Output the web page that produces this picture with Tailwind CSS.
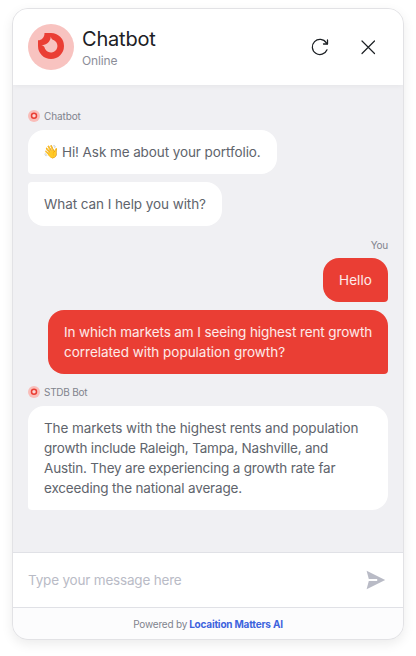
<!DOCTYPE html>
<html lang="en">
<head>
<meta charset="utf-8">
<title>Chatbot</title>
<script src="https://cdn.jsdelivr.net/npm/@tailwindcss/browser@4"></script>
</head>
<body class="bg-white w-[416px] h-[656px] overflow-hidden px-3 pt-2 font-['Inter',sans-serif]">
<svg class="hidden">
  <symbol id="mini" viewBox="0 0 12 12"><circle cx="6" cy="6" r="6" fill="#f9bdb9"/><circle cx="6" cy="5.8" r="2.500" fill="#fbd6d3" stroke="#ea3e34" stroke-width="1.5"/></symbol>
</svg>
<main class="w-[392px] h-[632px] rounded-2xl border border-[#e2e2e5] overflow-hidden flex flex-col bg-[#f0f0f3] shadow-[0_4px_12px_rgba(0,0,0,0.08)]">
  <header class="h-[76px] shrink-0 bg-white flex items-center pl-[15px] pr-[25px] shadow-[0_1px_6px_rgba(0,0,0,0.05)]">
    <svg class="size-[46px] shrink-0" viewBox="0 0 46 46"><circle cx="23" cy="23" r="23" fill="#f8c3c0"/><path d="M16.500 9H23a13 13 0 1 1-13 13V16.300c3.800 0 6.500-2.700 6.500-7.300Z" fill="#ea3e34"/><path d="M22.800 12.400c.5 2.300 1.300 3.200 3.200 3.800a6.500 6.500 0 1 1-9.100 8.200c-.6-1.900-1.500-2.800-3.500-3.300 5.500-.5 9-3.200 9.400-8.700Z" fill="#f8c3c0"/></svg>
    <div class="ml-2 flex-1 pt-[2px]">
      <h1 class="text-[20px] leading-6 text-[#1c2024]"><span class="tracking-[-0.2px]">Chatbot</span></h1>
      <p class="text-[12px] leading-4 mt-[2px] text-[#8b8d98]"><span class="tracking-[-0.15px]">Online</span></p>
    </div>
    <svg class="size-5 mr-7" viewBox="0 0 20 20" fill="none" stroke="#1c2024" stroke-width="1.3" stroke-linecap="round" stroke-linejoin="round"><path d="M17 12.800A7.600 7.600 0 1 1 16.300 5.800L17.200 6.800"/><path d="M17.500 3v4h-4"/></svg>
    <svg class="size-5" viewBox="0 0 20 20" fill="none" stroke="#1c2024" stroke-width="1.2" stroke-linecap="round"><path d="m4 4 12.500 12.500M16.500 4 4 16.500"/></svg>
  </header>
  <section class="flex-1 px-[15px] pt-[25px] flex flex-col items-start text-[13.5px] leading-5 text-[#60646c] whitespace-nowrap">
    <div class="flex items-center gap-1 h-3 text-[10px] leading-3 text-[#80838d]"><svg class="size-3"><use href="#mini"/></svg><span class="tracking-[-0.1px]">Chatbot</span></div>
    <div class="mt-2 w-[249px] h-11 bg-white rounded-2xl rounded-bl px-4 py-3 flex gap-[3px]"><span class="w-[15px] text-[13px] -ml-px mr-px -mt-px">👋</span><span class="tracking-[-0.09px]">Hi! Ask me about your portfolio.</span></div>
    <div class="mt-2 w-[194px] h-11 bg-white rounded-2xl rounded-tl px-4 py-3"><span class="tracking-[-0.07px]">What can I help you with?</span></div>
    <div class="mt-[13px] h-3 self-end text-[10px] leading-3 text-[#80838d]"><span class="tracking-[-0.2px]">You</span></div>
    <div class="mt-[7px] w-[65px] h-11 self-end bg-[#ea3e34] text-white/90 rounded-2xl rounded-br px-4 py-3"><span class="tracking-[0.1px]">Hello</span></div>
    <div class="mt-2 w-[340px] h-16 self-end bg-[#ea3e34] text-white/90 rounded-2xl rounded-br px-4 py-3"><span class="tracking-[-0.1px]">In which markets am I seeing highest rent growth</span><br><span class="tracking-[-0.02px]">correlated with population growth?</span></div>
    <div class="mt-3 flex items-center gap-1 h-3 text-[10px] leading-3 text-[#80838d]"><svg class="size-3"><use href="#mini"/></svg><span class="tracking-[-0.25px]">STDB Bot</span></div>
    <div class="mt-2 w-[360px] h-[104px] bg-white rounded-2xl rounded-bl px-4 py-3"><span class="tracking-[-0.1px]">The markets with the highest rents and population</span><br><span class="tracking-[-0.2px]">growth include Raleigh, Tampa, Nashville, and</span><br><span class="tracking-[-0.18px]">Austin. They are experiencing a growth rate far</span><br><span class="tracking-[-0.16px]">exceeding the national average.</span></div>
  </section>
  <div class="h-[55px] shrink-0 bg-white border-t border-[#e0e1e6] px-[15px] flex items-center justify-between text-[13.5px] text-[#b9bbc6]">
    <span class="tracking-[-0.19px]">Type your message here</span>
    <svg class="w-6 h-6" viewBox="0 0 24 24" fill="#b9bbc6"><path d="M2.600 2.700 21.200 12 2.600 21.300 4.800 13.100H13.200V11H4.800Z"/></svg>
  </div>
  <footer class="h-8 shrink-0 bg-[#fcfcfd] border-t border-[#e0e1e6] pt-px flex items-center justify-center gap-[2px] text-[10px] leading-3 text-[#80838d]"><span class="tracking-[-0.2px]">Powered by</span><a class="font-bold text-[#3e63dd] tracking-[-0.2px]">Locaition Matters AI</a></footer>
</main>
</body>
</html>
